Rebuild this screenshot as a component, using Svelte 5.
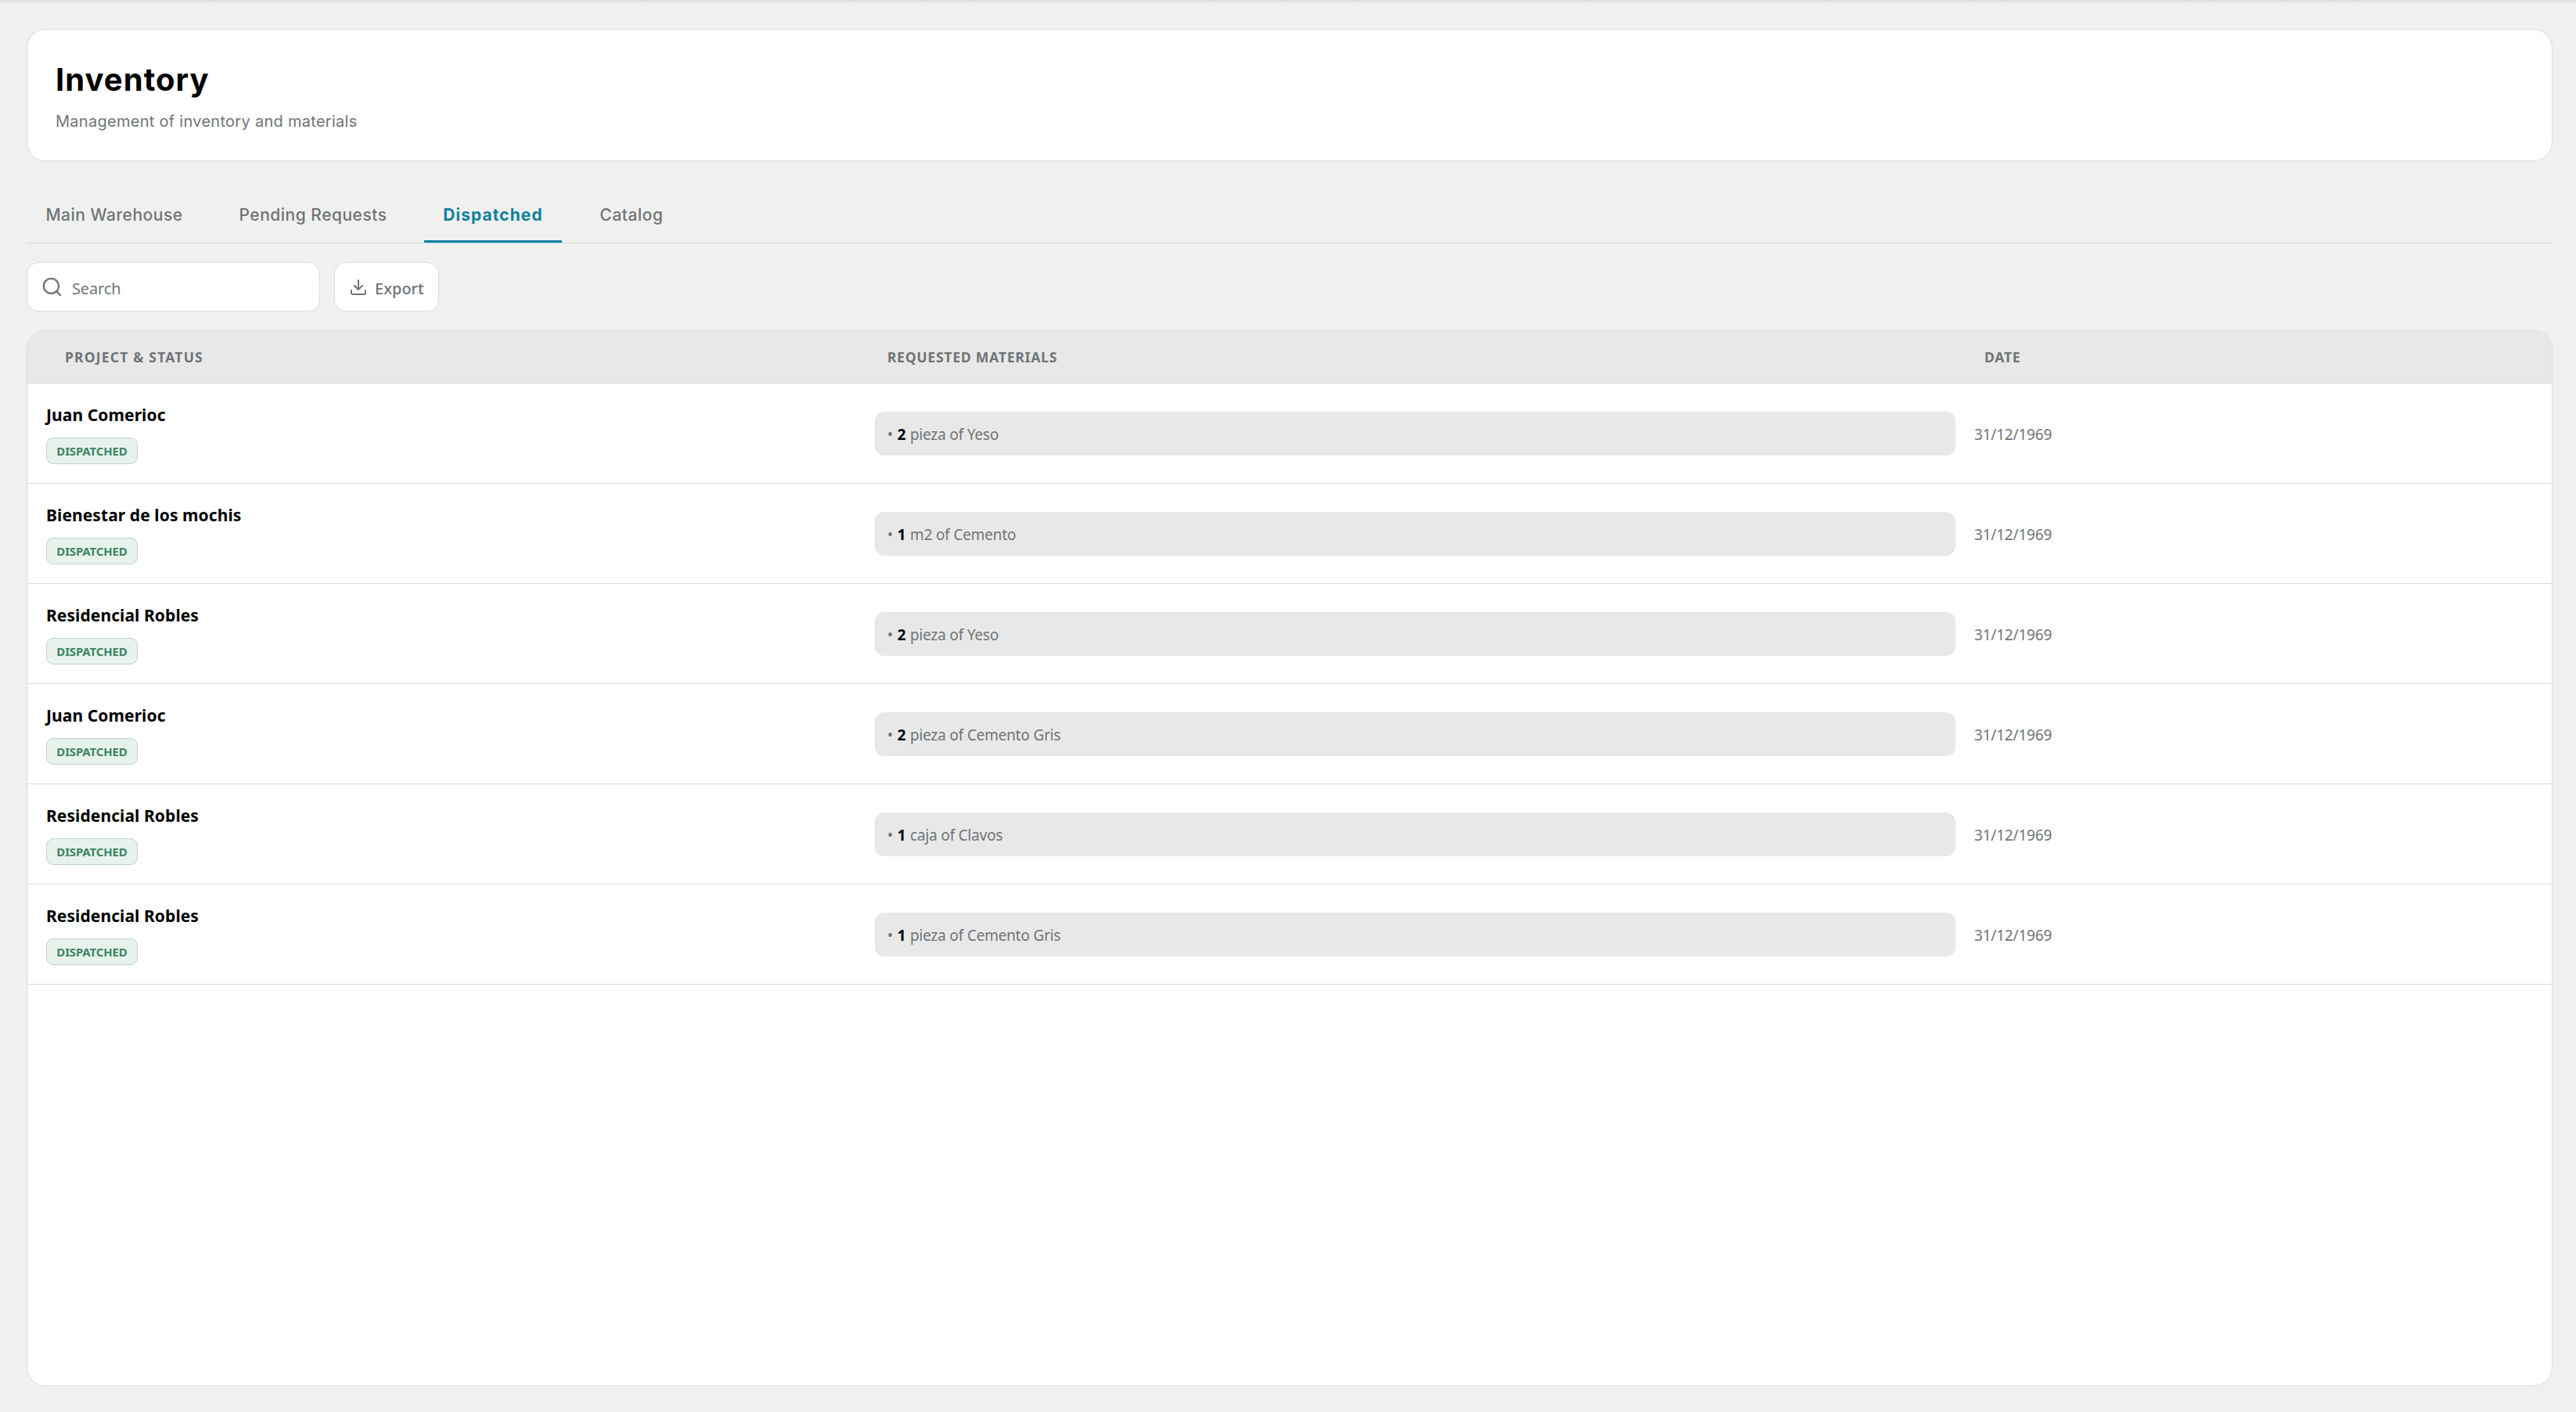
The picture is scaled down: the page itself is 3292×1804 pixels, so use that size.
<script lang="ts">
  const tabs = [
    { id: 'main', label: 'Main Warehouse' },
    { id: 'pending', label: 'Pending Requests' },
    { id: 'dispatched', label: 'Dispatched' },
    { id: 'catalog', label: 'Catalog' }
  ];
  let activeTab = $state('dispatched');

  const requests = [
    { project: 'Juan Comerioc', qty: 2, material: 'pieza of Yeso', date: '31/12/1969' },
    { project: 'Bienestar de los mochis', qty: 1, material: 'm2 of Cemento', date: '31/12/1969' },
    { project: 'Residencial Robles', qty: 2, material: 'pieza of Yeso', date: '31/12/1969' },
    { project: 'Juan Comerioc', qty: 2, material: 'pieza of Cemento Gris', date: '31/12/1969' },
    { project: 'Residencial Robles', qty: 1, material: 'caja of Clavos', date: '31/12/1969' },
    { project: 'Residencial Robles', qty: 1, material: 'pieza of Cemento Gris', date: '31/12/1969' }
  ];
</script>

<main class="page">
  <header class="card">
    <h1>Inventory</h1>
    <p>Management of inventory and materials</p>
  </header>

  <nav class="tabs">
    {#each tabs as tab}
      <button class="tab {tab.id}" class:active={tab.id === activeTab} onclick={() => (activeTab = tab.id)}>
        <span>{tab.label}</span>
      </button>
    {/each}
  </nav>

  <div class="toolbar">
    <label class="search">
      <svg width="27" height="27" viewBox="0 0 24 24">
        <circle cx="11" cy="11" r="8.5" />
        <path d="m21.5 21.5-4.5-4.5" />
      </svg>
      <input type="text" placeholder="Search" />
    </label>
    <button class="export">
      <svg width="24" height="24" viewBox="0 0 24 24">
        <path d="M12 3v12M7 10l5 5 5-5M3 16v3a2 2 0 0 0 2 2h14a2 2 0 0 0 2-2v-3" />
      </svg>
      <span>Export</span>
    </button>
  </div>

  <section class="table">
    <div class="row head">
      <div class="first">Project &amp; Status</div>
      <div class="second">Requested Materials</div>
      <div class="third">Date</div>
    </div>
    {#each requests as r}
      <div class="row">
        <div class="project">
          <span class="name">{r.project}</span>
          <span class="badge"><span>Dispatched</span></span>
        </div>
        <div class="materials">
          <span>• <b>{r.qty}</b> {r.material}</span>
        </div>
        <div class="date">{r.date}</div>
      </div>
    {/each}
  </section>
</main>

<style>
  :global(body) {
    background: #f0f0f0;
  }

  .page {
    box-sizing: border-box;
    height: 1804px;
    padding: 37px 30px 33px 34px;
    display: flex;
    flex-direction: column;
    font-family: "Noto Sans", sans-serif;
    color: #6f7476;
    background: linear-gradient(#d9d9d9, #e8e8e8 2px, #f0f0f0 7px);
  }

  button {
    border: 0;
    background: none;
    padding: 0;
    font: inherit;
    letter-spacing: inherit;
    color: inherit;
  }

  svg {
    fill: none;
    stroke: currentColor;
    stroke-width: 2;
    stroke-linecap: round;
    stroke-linejoin: round;
    flex: none;
  }

  .card {
    box-sizing: border-box;
    height: 169px;
    padding: 36px;
    border: 1px solid #dadbdb;
    border-radius: 24px;
    background: #fff;
    font-family: Inter, sans-serif;
  }

  h1 {
    margin: 0;
    font-size: 40px;
    line-height: 56px;
    font-weight: 700;
    letter-spacing: 1.05px;
    color: #000;
  }

  .card p {
    margin: 10px 0 0;
    font-size: 20px;
    line-height: 30px;
    letter-spacing: 0.28px;
  }

  .tabs {
    box-sizing: border-box;
    height: 75px;
    margin-top: 30px;
    margin-bottom: 24px;
    display: flex;
    gap: 24px;
    border-bottom: 1px solid #d7d8d8;
    font-family: Inter, sans-serif;
    font-size: 21px;
    letter-spacing: 0.5px;
  }

  .tab {
    box-sizing: border-box;
    height: 74px;
    padding-top: 6px;
    border-bottom: 3px solid transparent;
    font-weight: 500;
    white-space: nowrap;
  }

  .tab.active {
    color: #10809f;
    border-bottom-color: #10809f;
    box-shadow: 0 1px #c3e4f1;
    font-weight: 700;
    letter-spacing: 1.05px;
  }

  .main { width: 224px; }
  .pending { width: 236px; }
  .dispatched { width: 176px; }
  .catalog { width: 130px; }

  .toolbar {
    display: flex;
    gap: 18px;
    margin-bottom: 24px;
  }

  .search,
  .export {
    box-sizing: border-box;
    height: 63px;
    display: flex;
    align-items: center;
    border: 1px solid #dadbdb;
    border-radius: 15px;
    background: #fff;
  }

  .search {
    width: 375px;
    padding: 0 18px;
    gap: 12px;
  }

  .search input {
    flex: 1;
    min-width: 0;
    border: 0;
    padding: 4px 0 0;
    outline: none;
    font: inherit;
    font-size: 20px;
    letter-spacing: -0.15px;
    color: inherit;
    background: none;
  }

  .search input::placeholder {
    color: #6f7476;
    opacity: 1;
  }

  .export {
    width: 134px;
    padding-left: 18px;
    gap: 9px;
    font-size: 20px;
    font-weight: 500;
  }

  .export span {
    padding-top: 4px;
  }

  .table {
    flex: 1;
    border: 1px solid #dadbdb;
    border-radius: 24px;
    background: #fff;
    overflow: hidden;
  }

  .row {
    box-sizing: border-box;
    height: 128px;
    display: grid;
    grid-template-columns: 1083px 1381px 1fr;
    align-items: center;
    border-bottom: 1px solid #dadbdb;
  }

  .head {
    height: 67px;
    background: #e8e8e8;
    font-size: 17.5px;
    font-weight: 700;
    text-transform: uppercase;
    letter-spacing: 0.8px;
  }

  .first {
    padding-left: 48px;
    letter-spacing: 1.2px;
  }

  .second { padding-left: 16px; }
  .third { padding-left: 37px; }

  .project {
    padding-left: 24px;
    display: flex;
    flex-direction: column;
    align-items: flex-start;
    gap: 14px;
  }

  .name {
    font-size: 21px;
    line-height: 30px;
    font-weight: 700;
    letter-spacing: 0.08px;
    color: #000;
  }

  .badge {
    box-sizing: border-box;
    width: 117px;
    height: 34px;
    display: flex;
    align-items: center;
    justify-content: center;
    border: 1px solid #bfd3ca;
    border-radius: 9px;
    background: #e8f2ed;
    color: #3a8562;
    font-size: 15px;
    font-weight: 700;
    text-transform: uppercase;
    letter-spacing: -0.15px;
  }

  .materials {
    box-sizing: border-box;
    height: 56px;
    padding: 2px 0 0 16px;
    display: flex;
    align-items: center;
    border-radius: 12px;
    background: #e8e8e8;
    font-size: 19px;
    letter-spacing: -0.2px;
  }

  .materials b {
    margin: 0 1px;
    color: #000;
  }

  .date {
    padding: 2px 0 0 24px;
    font-size: 19px;
    letter-spacing: -0.2px;
  }
</style>
